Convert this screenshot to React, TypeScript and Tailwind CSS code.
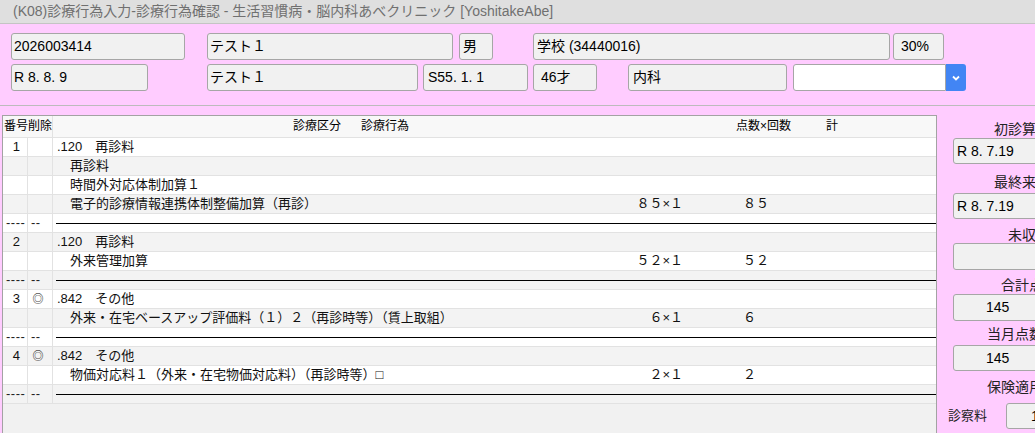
type Line =
  | { kind: 'head'; no: string; mark?: string; code: string; name: string }
  | { kind: 'item'; name: string; pts?: string; total?: string }
  | { kind: 'sep' };

const lines: Line[] = [
  { kind: 'head', no: '1', code: '.120', name: '再診料' },
  { kind: 'item', name: '再診料' },
  { kind: 'item', name: '時間外対応体制加算１' },
  { kind: 'item', name: '電子的診療情報連携体制整備加算（再診）', pts: '８５×１', total: '８５' },
  { kind: 'sep' },
  { kind: 'head', no: '2', code: '.120', name: '再診料' },
  { kind: 'item', name: '外来管理加算', pts: '５２×１', total: '５２' },
  { kind: 'sep' },
  { kind: 'head', no: '3', mark: '◎', code: '.842', name: 'その他' },
  { kind: 'item', name: '外来・在宅ベースアップ評価料（１）２（再診時等）（賃上取組）', pts: '６×１', total: '６' },
  { kind: 'sep' },
  { kind: 'head', no: '4', mark: '◎', code: '.842', name: 'その他' },
  { kind: 'item', name: '物価対応料１（外来・在宅物価対応料）（再診時等）□', pts: '２×１', total: '２' },
  { kind: 'sep' },
];

function Field({ w, ml, pl, children }: { w: string; ml: string; pl: string; children?: React.ReactNode }) {
  return (
    <div className={`${w} ${ml} ${pl} h-[27px] shrink-0 flex items-center rounded-[3px] border border-[#a6a6a6] bg-[#f1f1f1] text-[14px] text-black whitespace-nowrap overflow-hidden`}>
      {children}
    </div>
  );
}

function LineRow({ line, i }: { line: Line; i: number }) {
  const bg = i % 2 ? 'bg-[#f3f3f3]' : 'bg-white';

  if (line.kind === 'sep') {
    return (
      <div className={`flex h-[19px] border-b border-[#e2e2e2] text-[13px] leading-[18px] text-[#222] whitespace-nowrap ${bg}`}>
        <div className="w-[25px] shrink-0 border-r border-[#e2e2e2] pl-[3px] tracking-[0.5px]">----</div>
        <div className="w-[25px] shrink-0 border-r border-[#e2e2e2] pl-[3px] tracking-[0.5px]">--</div>
        <div className="flex-1 flex items-center pl-[3px]">
          <div className="flex-1 h-px bg-black" />
        </div>
      </div>
    );
  }

  return (
    <div className={`flex h-[19px] border-b border-[#e2e2e2] text-[13px] leading-[18px] text-[#111] whitespace-pre ${bg}`}>
      <div className="w-[25px] shrink-0 border-r border-[#e2e2e2] text-right pr-[7px]">
        {line.kind === 'head' && line.no}
      </div>
      <div className="w-[25px] shrink-0 border-r border-[#e2e2e2] text-center">
        {line.kind === 'head' && line.mark && <span className="text-[11px] text-black pr-[4px]">{line.mark}</span>}
      </div>
      <div className="flex-1 flex items-center">
        {line.kind === 'head' && <span className="pl-[4px]">{line.code}　{line.name}</span>}
        {line.kind === 'item' && (
          <>
            <span className="flex-1 pl-[17px]">{line.name}</span>
            <span className="w-[130px] text-right">{line.pts}</span>
            <span className="w-[253px] pl-[60px]">{line.total}</span>
          </>
        )}
      </div>
    </div>
  );
}

function SideLabel({ mt, children }: { mt: string; children: React.ReactNode }) {
  return <div className={`${mt} h-[16px] leading-[16px] text-center text-[14px] text-[#222] whitespace-nowrap`}>{children}</div>;
}

function SideBox({ mt, h, pl, children }: { mt: string; h: string; pl: string; children?: React.ReactNode }) {
  return (
    <div className={`${mt} ${h} ${pl} mx-[16px] flex items-center rounded-[3px] border border-[#a6a6a6] bg-[#f1f1f1] text-[14px] text-black`}>
      {children}
    </div>
  );
}

export default function App() {
  return (
    <div className="w-[1035px] h-[433px] overflow-hidden flex flex-col bg-[#ffccff] [font-family:'Liberation_Sans','Noto_Sans_CJK_JP',sans-serif]">
      {/* window title */}
      <div className="h-[24px] shrink-0 bg-[#dfdfdf] border-b border-[#c4c4c4] pl-[13px] text-[14px] leading-[22px] text-[#707070] whitespace-nowrap">
        (K08)診療行為入力-診療行為確認 - 生活習慣病・脳内科あべクリニック [YoshitakeAbe]
      </div>

      {/* patient header */}
      <div className="shrink-0 pt-[9px] pb-[14px] border-b border-[#bcbcbc]">
        <div className="flex">
          <Field w="w-[174px]" ml="ml-[11px]" pl="pl-[2px]">2026003414</Field>
          <Field w="w-[246px]" ml="ml-[22px]" pl="pl-[2px]">テスト１</Field>
          <Field w="w-[34px]" ml="ml-[6px]" pl="pl-[3px]">男</Field>
          <Field w="w-[357px]" ml="ml-[40px]" pl="pl-[3px]">学校 (34440016)</Field>
          <Field w="w-[51px]" ml="ml-[3px]" pl="pl-[7px]">30%</Field>
        </div>
        <div className="flex mt-[4px]">
          <Field w="w-[137px]" ml="ml-[11px]" pl="pl-[2px]">R 8. 8. 9</Field>
          <Field w="w-[211px]" ml="ml-[59px]" pl="pl-[2px]">テスト１</Field>
          <Field w="w-[105px]" ml="ml-[5px]" pl="pl-[4px]">S55. 1. 1</Field>
          <Field w="w-[64px]" ml="ml-[5px]" pl="pl-[7px]">46才</Field>
          <Field w="w-[159px]" ml="ml-[31px]" pl="pl-[4px]">内科</Field>
          <div className="ml-[6px] flex h-[27px]">
            <div className="w-[153px] rounded-l-[3px] border border-[#a6a6a6] bg-white" />
            <div className="w-[20px] rounded-r-[3px] bg-[#4285f4] flex items-center justify-center">
              <svg width="8" height="6" viewBox="0 0 8 6" fill="none">
                <path d="M1 1.5 L4 4.5 L7 1.5" stroke="white" strokeWidth="1.8" />
              </svg>
            </div>
          </div>
        </div>
      </div>

      <div className="flex-1 flex pt-[9px] min-h-0">
        {/* order list */}
        <div className="ml-[2px] w-[935px] shrink-0 flex flex-col border-l border-t border-r border-[#a3a3a3] bg-[#f1f1f1]">
          <div className="flex h-[22px] shrink-0 border-b border-[#e2e2e2] bg-[#f8f8f8] text-[12px] leading-[21px] text-black whitespace-nowrap">
            <div className="w-[50px] shrink-0 border-r border-[#e2e2e2] pl-[1px]">番号削除</div>
            <span className="ml-[240px]">診療区分</span>
            <span className="ml-[20px]">診療行為</span>
            <span className="ml-[327px]">点数×回数</span>
            <span className="ml-[35px]">計</span>
          </div>
          {lines.map((line, i) => (
            <LineRow key={i} line={line} i={i} />
          ))}
        </div>

        {/* totals */}
        <div className="w-[184px] shrink-0 flex flex-col">
          <SideLabel mt="mt-[6px]">初診算定日</SideLabel>
          <SideBox mt="mt-[1px]" h="h-[26px]" pl="pl-[3px]">R 8. 7.19</SideBox>
          <SideLabel mt="mt-[10px]">最終来院日</SideLabel>
          <SideBox mt="mt-[3px]" h="h-[26px]" pl="pl-[3px]">R 8. 7.19</SideBox>
          <SideLabel mt="mt-[8px]">未収金</SideLabel>
          <SideBox mt="mt-0" h="h-[27px]" pl="pl-[3px]" />
          <SideLabel mt="mt-[7px]">合計点数</SideLabel>
          <SideBox mt="mt-[1px]" h="h-[27px]" pl="pl-[32px]">145</SideBox>
          <SideLabel mt="mt-[5px]">当月点数累計</SideLabel>
          <SideBox mt="mt-[3px]" h="h-[26px]" pl="pl-[32px]">145</SideBox>
          <SideLabel mt="mt-[8px]">保険適用点数</SideLabel>
          <div className="mt-[8px] flex items-center">
            <span className="ml-[11px] w-[58px] shrink-0 text-[13px] text-[#222]">診察料</span>
            <div className="h-[26px] w-[80px] shrink-0 pl-[24px] flex items-center rounded-[3px] border border-[#a6a6a6] bg-[#f1f1f1] text-[14px] text-black">
              145
            </div>
          </div>
        </div>
      </div>
    </div>
  );
}
